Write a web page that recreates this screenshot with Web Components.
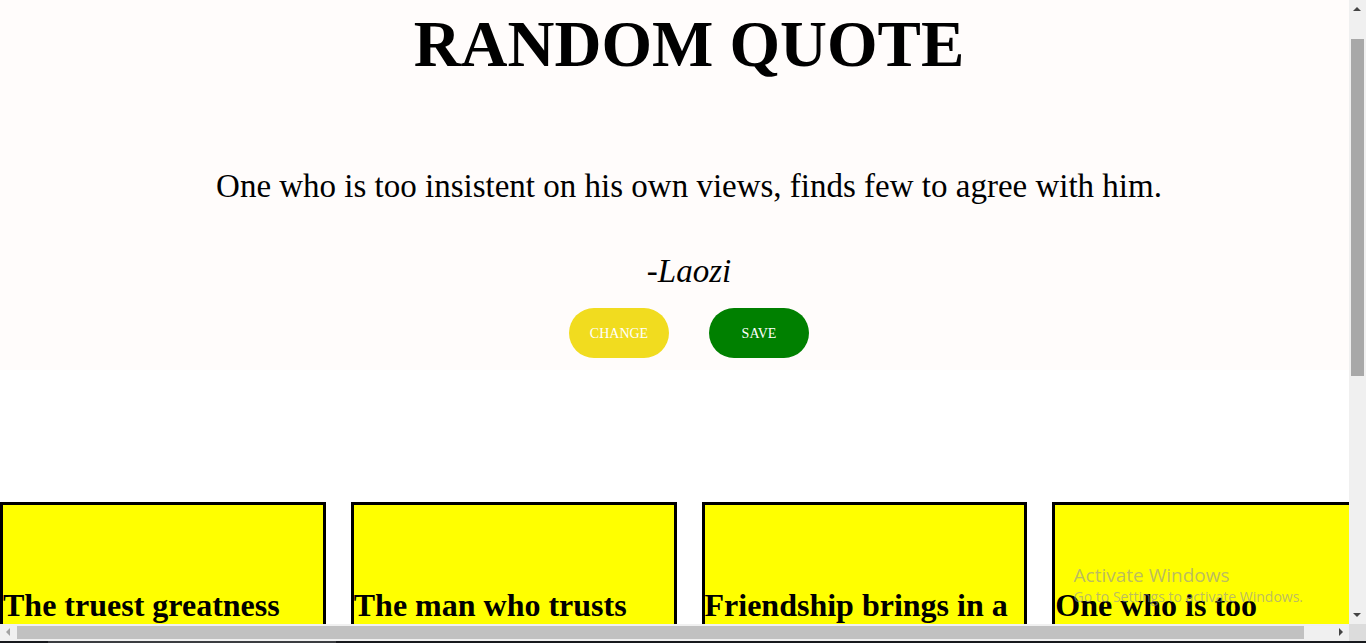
<!DOCTYPE html>
<html lang="en">
<head>
<meta charset="utf-8">
<title>Random Quote</title>
<style>
html, body { margin: 0; height: 100%; }
body { overflow: hidden; background: #fff; color: #000; font-family: "Liberation Serif", serif; }
</style>
</head>
<body>
<quote-app></quote-app>
<script>
const define = (name, html) => {
  const template = document.createElement('template');
  template.innerHTML = html;
  customElements.define(name, class extends HTMLElement {
    constructor() {
      super();
      this.attachShadow({ mode: 'open' }).append(template.content.cloneNode(true));
    }
  });
};

define('pill-button', `
<style>
:host { display: block; }
button { display: block; width: 100px; height: 50px; padding: 2px 0 0; border: 0; border-radius: 25px;
  background: var(--pill, green); color: #fff; font: 14px/20px "Liberation Serif", serif; cursor: pointer; }
</style>
<button type="button"><slot></slot></button>`);

define('quote-hero', `
<style>
:host { display: block; background: #fffcfb; text-align: center; padding-bottom: 12px; }
h1 { margin: 0; padding-top: 7px; font-size: 65px; line-height: 74px; }
p { margin: 85px 0 0; font-size: 33px; line-height: 40px; }
cite { display: block; margin-top: 45px; font-size: 33px; line-height: 40px; }
.actions { display: flex; justify-content: center; gap: 40px; margin-top: 17px; }
</style>
<h1>RANDOM QUOTE</h1>
<p><slot></slot></p>
<cite><slot name="author"></slot></cite>
<div class="actions">
  <pill-button style="--pill:#f1dc1f">CHANGE</pill-button>
  <pill-button>SAVE</pill-button>
</div>`);

define('quote-card', `
<style>
:host { display: block; box-sizing: border-box; min-height: 280px; border: 3px solid #000; background: #ff0; padding: 82px 0 0; }
h2 { margin: 0; font-size: 32px; line-height: 36px; }
</style>
<h2><slot></slot></h2>`);

define('scroll-bar', `
<style>
:host { display: flex; align-items: center; background: #f0f0f0; }
:host([vertical]) { flex-direction: column; }
svg { display: block; flex: none; width: 17px; height: 17px; fill: #444; }
.track { flex: 1; display: flex; align-self: stretch; padding: 2px 0; }
:host([vertical]) .track { flex-direction: column; padding: 0 2px; }
.before { flex: var(--before, 0) 0 0; }
.thumb { flex: var(--thumb) 0 0; background: var(--color, #c1c1c1); }
.after { flex: var(--after) 0 0; }
.up, .down { display: none; }
:host([vertical]) .up, :host([vertical]) .down { display: block; }
:host([vertical]) .left, :host([vertical]) .right { display: none; }
.left { fill: #a3a3a3; }
</style>
<svg class="up" viewBox="0 0 17 17"><path d="M4 11h8L8 7z"/></svg>
<svg class="left" viewBox="0 0 17 17"><path d="M10 4v8L6 8z"/></svg>
<div class="track"><div class="before"></div><div class="thumb"></div><div class="after"></div></div>
<svg class="down" viewBox="0 0 17 17"><path d="M4 6h8l-4 4z"/></svg>
<svg class="right" viewBox="0 0 17 17"><path d="M7 4v8l4-4z"/></svg>`);

define('activation-notice', `
<style>
:host { display: block; font-family: "Open Sans", sans-serif; color: rgba(150, 150, 150, .65); pointer-events: none; white-space: nowrap; }
div { font-size: 19px; line-height: 24px; }
small { display: block; font-size: 14px; line-height: 20px; }
</style>
<div>Activate Windows</div>
<small>Go to Settings to activate Windows.</small>`);

define('quote-app', `
<style>
:host { display: grid; height: 100vh; grid-template: minmax(0, 1fr) 17px 2px / minmax(0, 1fr) 17px; }
main { overflow: hidden; }
.page { width: calc(100% + 29px); }
.cards { display: grid; grid-template-columns: repeat(4, minmax(0, 1fr)); gap: 25px; margin-top: 132px; }
.corner { background: #dcdcdc; }
.edge { grid-column: 1 / -1; background: linear-gradient(90deg, #17191d 48px, #3b3d41 48px, #3b3d41 336px, #17191d 336px); }
activation-notice { position: absolute; right: 63px; bottom: 36px; }
</style>
<main>
  <div class="page">
    <quote-hero>One who is too insistent on his own views, finds few to agree with him.<span slot="author">-Laozi</span></quote-hero>
    <div class="cards">
      <quote-card>The truest greatness</quote-card>
      <quote-card>The man who trusts</quote-card>
      <quote-card>Friendship brings in a</quote-card>
      <quote-card>One who is too</quote-card>
    </div>
  </div>
</main>
<scroll-bar vertical style="--before:22;--thumb:337;--after:231;--color:#a8a8a8"></scroll-bar>
<scroll-bar style="--thumb:1287;--after:28"></scroll-bar>
<div class="corner"></div>
<div class="edge"></div>
<activation-notice></activation-notice>`);
</script>
</body>
</html>
